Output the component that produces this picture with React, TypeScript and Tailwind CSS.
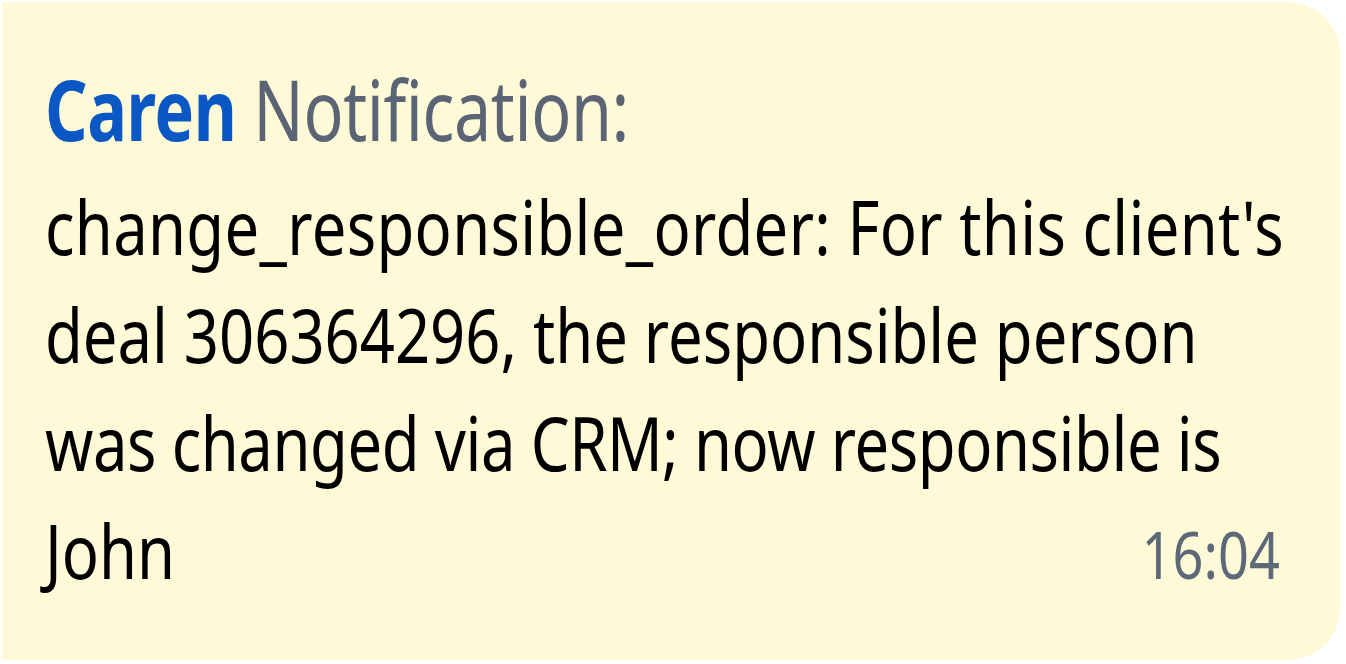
import React from 'react';

const App = () => {
  return (
    <div className="w-[1346px] h-[664px] bg-white p-[2px] overflow-hidden">
      <div className="w-[1338px] h-[658px] bg-[#fef9d6] rounded-r-[52px] pl-[43px] pt-[52px] font-['Noto_Sans',sans-serif] whitespace-nowrap">
        <div className="text-[84px] leading-[110px] tracking-[-0.5px] scale-x-[0.79] origin-left">
          <span className="font-bold text-[#0b57c4]">Caren</span>{' '}
          <span className="text-[#5a6475]">Notification:</span>
        </div>
        <div className="w-[1506px] text-[75px] leading-[108px] text-black mt-[8px] scale-x-[0.82] origin-left">
          <div className="tracking-[0.4px]">change_responsible_order: For this client's</div>
          <div>deal 306364296, the responsible person</div>
          <div className="tracking-[-0.5px]">was changed via CRM; now responsible is</div>
          <div className="flex items-baseline justify-between">
            <span>John</span>
            <span className="text-[66px] text-[#5d6879]">16:04</span>
          </div>
        </div>
      </div>
    </div>
  );
};

export default App;
